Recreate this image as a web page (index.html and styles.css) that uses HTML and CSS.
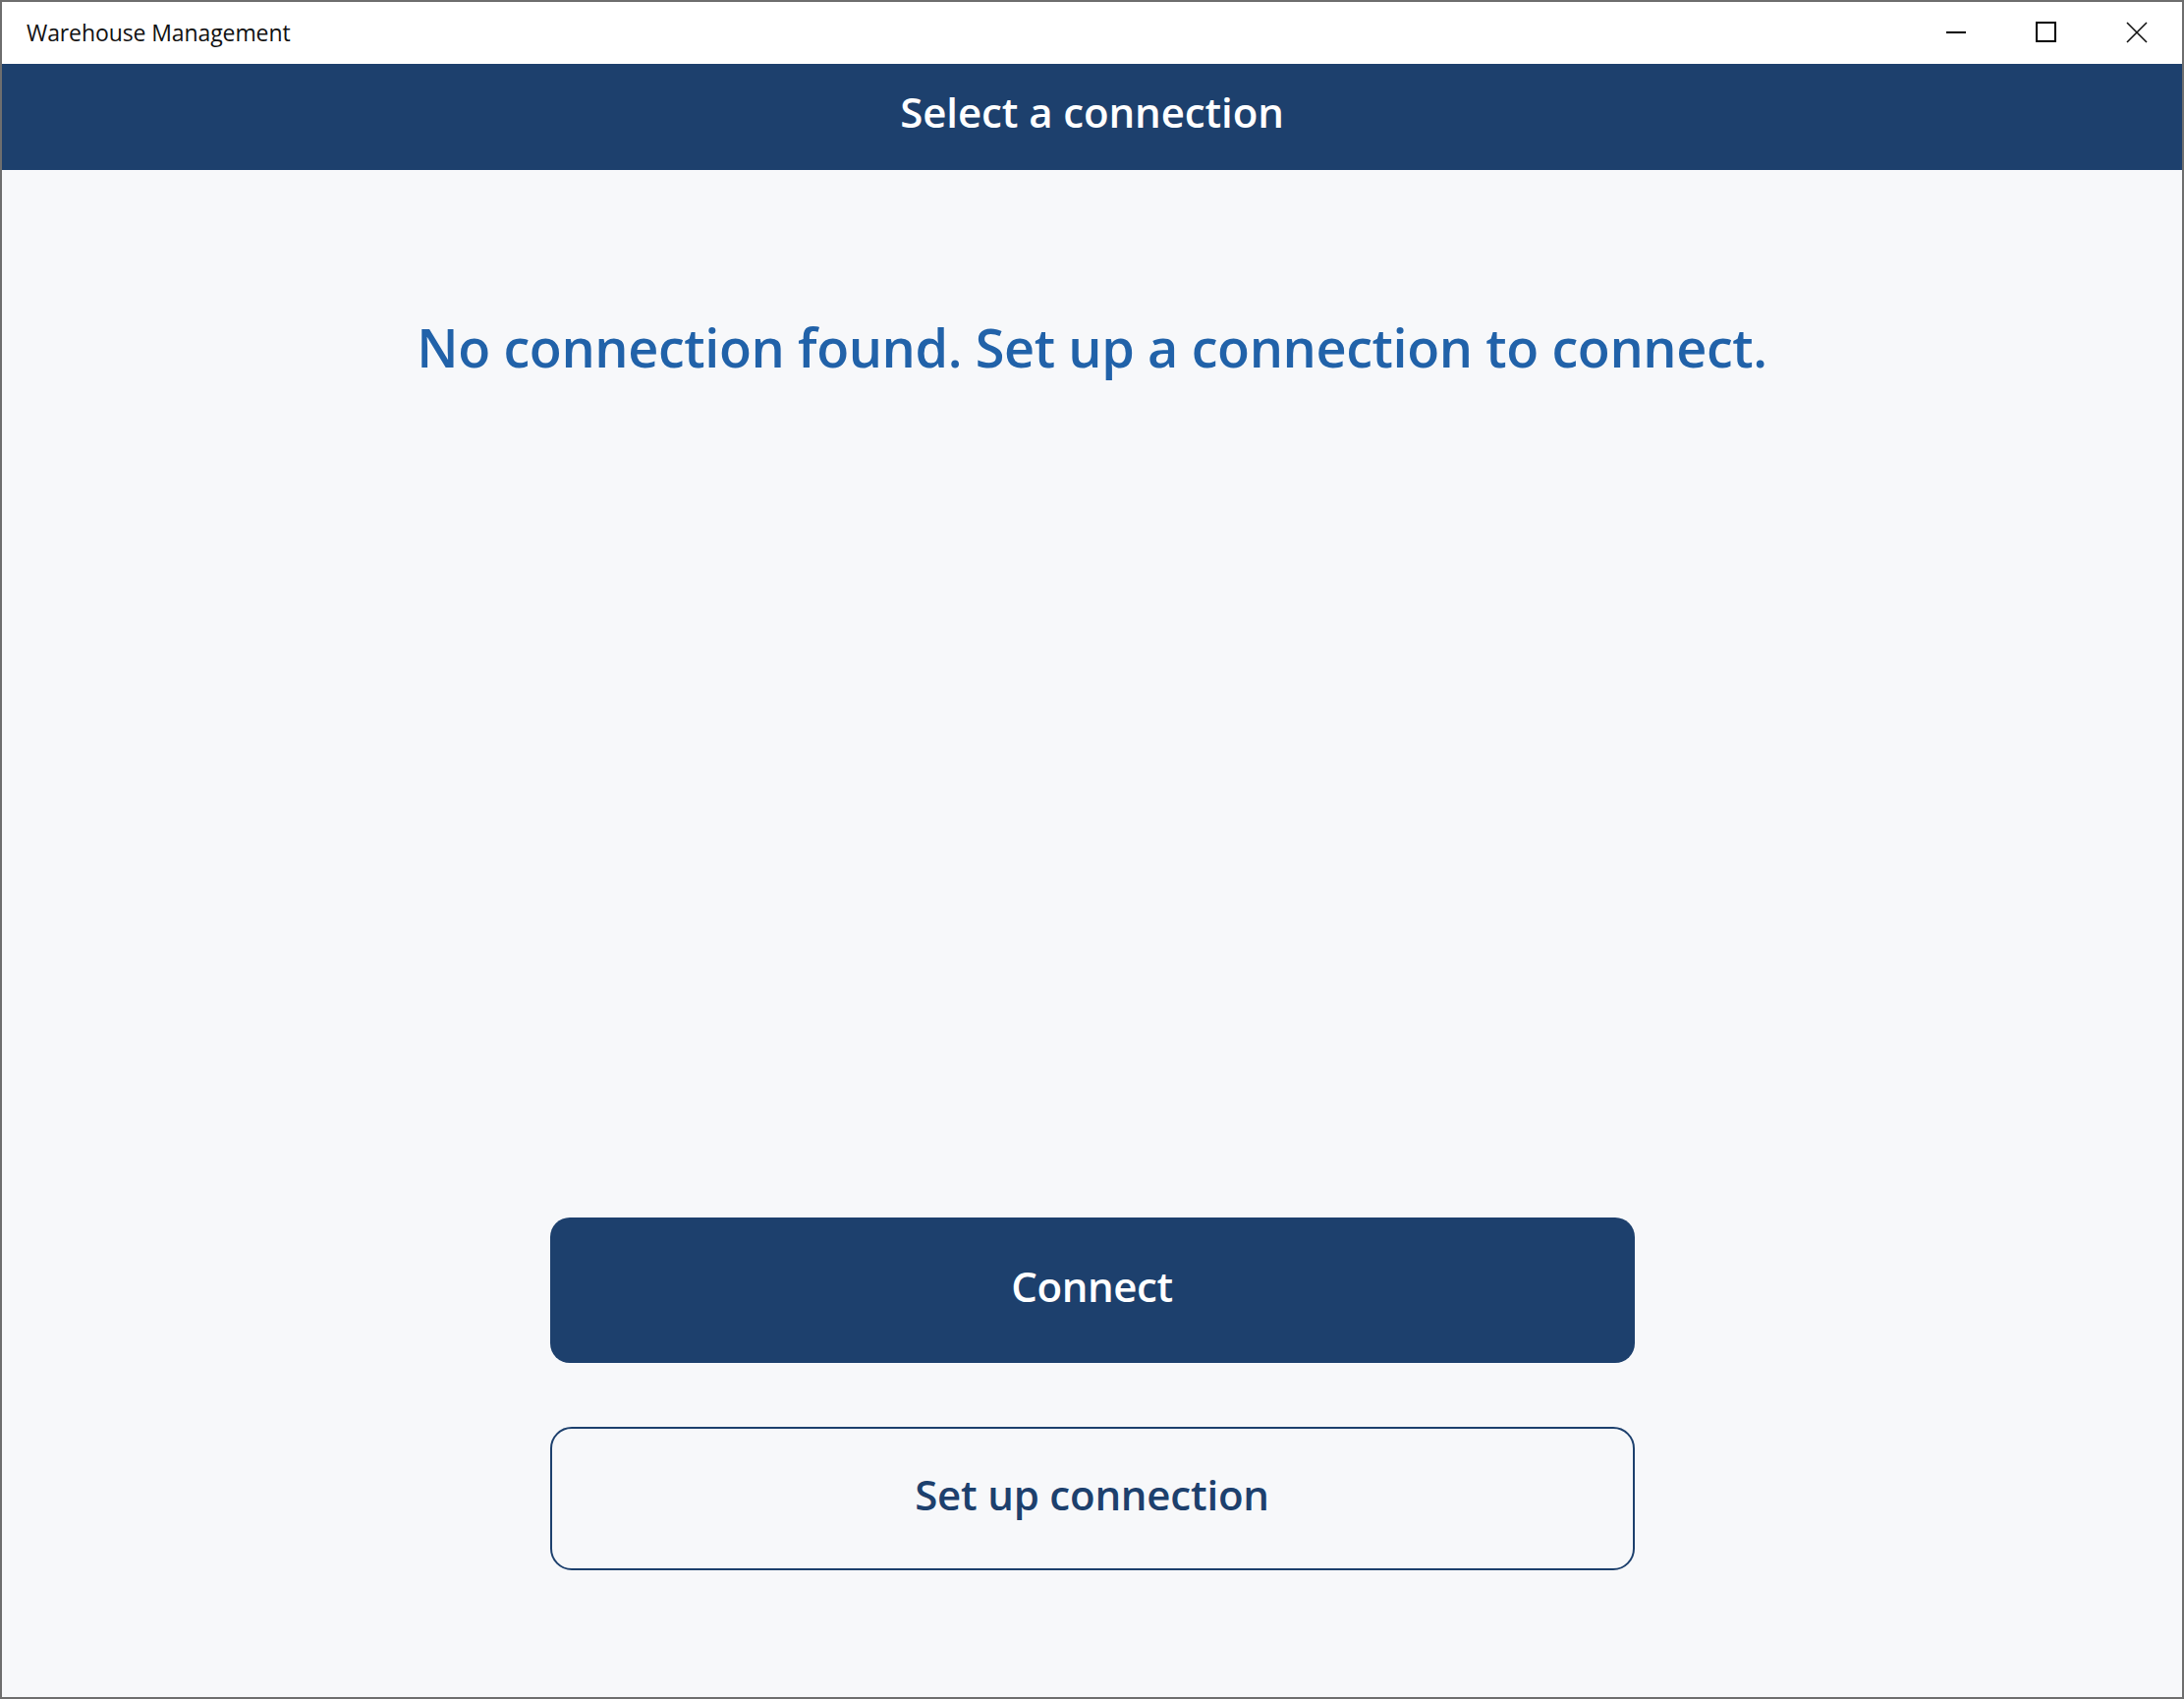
FILE: index.html
```html
<!DOCTYPE html>
<html lang="en">
<head>
<meta charset="utf-8">
<title>Warehouse Management</title>
<link rel="stylesheet" href="styles.css">
</head>
<body>
<div class="window">
  <div class="titlebar">
    <div class="app-title">Warehouse Management</div>
    <div class="controls">
      <div class="ctrl">
        <svg width="22" height="22" viewBox="0 0 22 22"><line x1="1" y1="11" x2="21" y2="11" stroke="#000" stroke-width="2"/></svg>
      </div>
      <div class="ctrl">
        <svg width="22" height="22" viewBox="0 0 22 22"><rect x="1" y="1" width="19" height="19" fill="none" stroke="#000" stroke-width="2"/></svg>
      </div>
      <div class="ctrl">
        <svg width="22" height="22" viewBox="0 0 22 22"><path d="M1 1 L21 21 M21 1 L1 21" stroke="#111" stroke-width="1.6" fill="none"/></svg>
      </div>
    </div>
  </div>
  <header class="page-header">Select a connection</header>
  <main class="content">
    <p class="message">No connection found. Set up a connection to connect.</p>
    <div class="spacer"></div>
    <div class="actions">
      <button class="btn btn-primary">Connect</button>
      <button class="btn btn-outline">Set up connection</button>
    </div>
  </main>
</div>
</body>
</html>
```
FILE: styles.css
```css
html, body {
  margin: 0;
  padding: 0;
}
body {
  width: 2223px;
  height: 1729px;
  overflow: hidden;
  font-family: "Open Sans", "Noto Sans", sans-serif;
  background: #707070;
}
.window {
  box-sizing: border-box;
  width: 2223px;
  height: 1729px;
  border: 2px solid #6e6e6e;
  display: flex;
  flex-direction: column;
  background: #f7f8fa;
}
.titlebar {
  height: 63px;
  flex: none;
  background: #ffffff;
  display: flex;
  align-items: center;
  justify-content: space-between;
}
.app-title {
  padding-left: 25px;
  font-size: 23px;
  letter-spacing: -0.1px;
  color: #111;
  padding-bottom: 1px;
}
.controls {
  display: flex;
  height: 100%;
  align-items: center;
  padding-bottom: 2px;
}
.ctrl {
  width: 92px;
  display: flex;
  justify-content: center;
}
.ctrl svg { display: block; }
.page-header {
  height: 108px;
  flex: none;
  background: #1d406d;
  color: #ffffff;
  display: flex;
  align-items: center;
  justify-content: center;
  font-size: 42px;
  font-weight: 600;
  letter-spacing: -0.1px;
  padding-bottom: 12px;
  box-sizing: border-box;
}
.content {
  flex: 1;
  display: flex;
  flex-direction: column;
  align-items: center;
  padding-bottom: 129px;
}
.message {
  margin: 0;
  padding-top: 145px;
  font-size: 54px;
  line-height: 70px;
  font-weight: 600;
  color: #2162a9;
  letter-spacing: -0.4px;
}
.spacer { flex: 1; }
.actions {
  display: flex;
  flex-direction: column;
  gap: 65px;
}
.btn {
  width: 1104px;
  height: 148px;
  border-radius: 20px;
  font-family: "Open Sans", "Noto Sans", sans-serif;
  font-size: 42px;
  font-weight: 600;
  letter-spacing: -0.4px;
  padding: 0 0 10px 0;
  cursor: pointer;
}
.btn-primary {
  background: #1d406d;
  color: #ffffff;
  border: none;
}
.btn-outline {
  height: 146px;
  background: #f7f8fa;
  color: #1d406d;
  border: 2px solid #1d406d;
  border-radius: 22px;
  letter-spacing: -0.2px;
}
```
